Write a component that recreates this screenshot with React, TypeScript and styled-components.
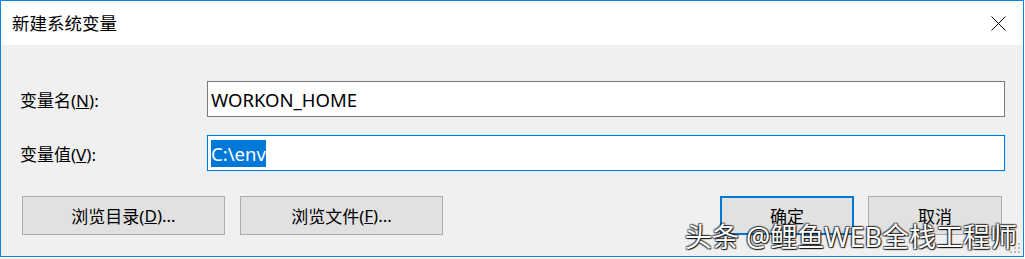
import React from "react";
import styled, { createGlobalStyle } from "styled-components";

const GlobalStyle = createGlobalStyle`
    html, body {
        margin: 0;
        padding: 0;
        background: #ffffff;
    }
    body {
        font-family: "Noto Sans", "Noto Sans CJK SC", sans-serif;
    }
`;

const Window = styled.div`
    position: relative;
    box-sizing: border-box;
    width: 1024px;
    height: 257px;
    border: 1px solid #1883d7;
    display: flex;
    flex-direction: column;
    background: #f0f0f0;
    overflow: hidden;
`;

const TitleBar = styled.div`
    height: 44px;
    flex-shrink: 0;
    background: #ffffff;
    display: flex;
    align-items: center;
    justify-content: space-between;
    padding: 0 17px 0 11px;
`;

const Title = styled.span`
    font-size: 17.5px;
    color: #000000;
    padding-bottom: 2px;
`;

const CloseButton = styled.div`
    width: 16px;
    height: 16px;
    display: flex;
    align-items: center;
    justify-content: center;
`;

const Body = styled.div`
    flex: 1;
    display: flex;
    flex-direction: column;
    padding: 36px 18px 0 19px;
`;

const FieldRow = styled.div`
    display: flex;
    align-items: center;
    height: 36px;
    margin-bottom: 18px;
`;

const Label = styled.div`
    width: 187px;
    flex-shrink: 0;
    font-size: 17px;
    color: #000000;
`;

const TextBox = styled.div<{ $focused?: boolean }>`
    box-sizing: border-box;
    flex: 1;
    height: 36px;
    background: #ffffff;
    border: 1px solid ${(p) => (p.$focused ? "#0078d7" : "#7a7a7a")};
    box-shadow: ${(p) => (p.$focused ? "0 0 0 1px #dcecfc" : "none")};
    display: flex;
    align-items: center;
    padding-left: 3px;
    font-size: 18.5px;
    color: #000000;
`;

const Selected = styled.span`
    background: #0078d7;
    color: #ffffff;
    line-height: 27px;
`;

const ButtonRow = styled.div`
    display: flex;
    align-items: center;
    padding: 7px 3px 0 2px;
`;

const Button = styled.div<{ $default?: boolean; $w: number }>`
    box-sizing: border-box;
    width: ${(p) => p.$w}px;
    height: 39px;
    background: #e1e1e1;
    border: ${(p) => (p.$default ? "2px solid #0078d7" : "1px solid #adadad")};
    display: flex;
    align-items: center;
    justify-content: center;
    font-size: 17px;
    color: #000000;
`;

const Gap = styled.div<{ $w: number }>`
    width: ${(p) => p.$w}px;
    flex-shrink: 0;
`;

const Spacer = styled.div`
    flex: 1;
`;

const Watermark = styled.div`
    position: absolute;
    left: 684px;
    top: 218px;
    font-size: 27px;
    line-height: 36px;
    color: #ffffff;
    white-space: nowrap;
    text-shadow: 1px 1px 1px rgba(0, 0, 0, 0.9), -1px -1px 1px rgba(0, 0, 0, 0.55),
        1px -1px 1px rgba(0, 0, 0, 0.55), -1px 1px 1px rgba(0, 0, 0, 0.55);
`;

const Grip = styled.svg`
    position: absolute;
    right: 3px;
    bottom: 3px;
`;

export default function App() {
    return (
        <>
            <GlobalStyle />
            <Window>
                <TitleBar>
                    <Title>新建系统变量</Title>
                    <CloseButton>
                        <svg width="15" height="15" viewBox="0 0 15 15">
                            <path d="M0.5 0.5 L14.5 14.5 M14.5 0.5 L0.5 14.5" stroke="#000" strokeWidth="1" />
                        </svg>
                    </CloseButton>
                </TitleBar>
                <Body>
                    <FieldRow>
                        <Label>变量名(<u>N</u>):</Label>
                        <TextBox>WORKON_HOME</TextBox>
                    </FieldRow>
                    <FieldRow>
                        <Label>变量值(<u>V</u>):</Label>
                        <TextBox $focused>
                            <Selected>C:\env</Selected>
                        </TextBox>
                    </FieldRow>
                    <ButtonRow>
                        <Button $w={203}>浏览目录(<u>D</u>)...</Button>
                        <Gap $w={15} />
                        <Button $w={203}>浏览文件(<u>F</u>)...</Button>
                        <Spacer />
                        <Button $w={134} $default>确定</Button>
                        <Gap $w={14} />
                        <Button $w={134}>取消</Button>
                    </ButtonRow>
                </Body>
                <Watermark>头条 @鲤鱼WEB全栈工程师</Watermark>
                <Grip width="10" height="10" viewBox="0 0 10 10">
                    <rect x="8" y="0" width="2" height="2" fill="#bcbcbc" />
                    <rect x="4" y="4" width="2" height="2" fill="#bcbcbc" />
                    <rect x="8" y="4" width="2" height="2" fill="#bcbcbc" />
                    <rect x="0" y="8" width="2" height="2" fill="#bcbcbc" />
                    <rect x="4" y="8" width="2" height="2" fill="#bcbcbc" />
                    <rect x="8" y="8" width="2" height="2" fill="#bcbcbc" />
                </Grip>
            </Window>
        </>
    );
}
